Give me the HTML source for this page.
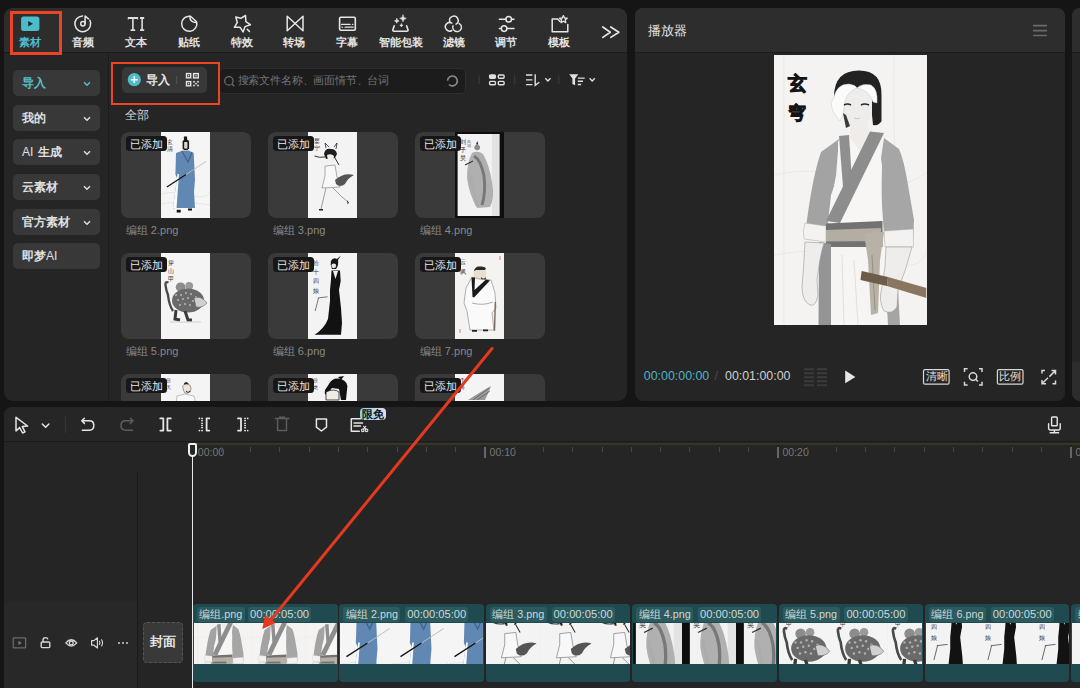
<!DOCTYPE html>
<html><head><meta charset="utf-8">
<style>
*{box-sizing:border-box;margin:0;padding:0}
html,body{width:1080px;height:688px;overflow:hidden;background:#151515;font-family:"Liberation Sans",sans-serif;color:#e6e6e6;position:relative}
.a{position:absolute}
.panel{position:absolute;background:#252525;border-radius:8px;overflow:hidden}
.hdr{position:absolute;left:0;top:0;right:0;height:45px;background:#2d2d2d;border-bottom:1px solid #1b1b1b}
.tl{position:absolute;top:37.2px;width:60px;margin-left:-30px;text-align:center;font-size:10.6px;line-height:11px;font-weight:bold;color:#e4e4e4;white-space:nowrap}
.sbtn{position:absolute;left:13px;width:86.7px;height:26px;background:#383838;border-radius:5px;font-size:12px;font-weight:bold;color:#e0e0e0;line-height:26px;padding-left:9px;white-space:nowrap}
.sbtn svg{position:absolute;left:70px;top:11px}
.card{position:absolute;width:130px;height:86px;background:#3a3a3a;border-radius:8px;overflow:hidden}
.card .img{position:absolute;left:40px;top:0;width:49px;height:86px;background:#f3f2f0;overflow:hidden}
.badge{position:absolute;left:5px;top:4.3px;height:14.7px;padding:0 4px 0 4px;background:#171717;border-radius:3.5px;font-size:10.6px;line-height:16px;color:#e8e8e8;white-space:nowrap}
.lbl{position:absolute;font-size:11px;color:#888;line-height:12px;white-space:nowrap}
.redbox{position:absolute;border:3px solid #ee4426}
.clip{position:absolute;top:604px;width:144.5px;height:78px;background:#1e4a50;border-radius:4px;overflow:hidden}
.clip .th{position:absolute;left:0.7px;right:0.7px;top:19px;height:41px;background:#f2f1ef;overflow:hidden}
.clip .cb{position:absolute;top:2.5px;height:15px;background:#2b5a5f;border-radius:3px;font-size:11.2px;line-height:15px;color:#cbd9d9;padding:0 2px;white-space:nowrap}
.tick{position:absolute;top:447px;width:1px;height:5px;background:#474747}
.mtick{position:absolute;top:446.7px;width:2px;height:11.2px;background:#666}
.rt{position:absolute;top:447px;font-size:10.5px;line-height:11px;color:#777}
</style></head><body>
<svg width="0" height="0" style="position:absolute">
<defs>
<!-- player image 152.5x270 -->
<symbol id="s0" viewBox="0 0 152.5 270">
  <rect width="152.5" height="270" fill="#f4f3f1"/>
  <g fill="none" stroke="#e6e4e0" stroke-width="0.7"><path d="M0 120 Q40 110 80 125 T152 118 M10 0 V270 M0 200 Q50 190 100 205 T152 195 M120 0 Q118 80 125 160"/></g>
  <!-- text 玄穹 -->
  <text x="23" y="34.5" font-size="19" text-anchor="middle" fill="#141414" font-family="Liberation Serif,serif" font-weight="bold" stroke="#141414" stroke-width="0.9">玄</text>
  <text x="22.5" y="64" font-size="18" text-anchor="middle" fill="#141414" font-family="Liberation Serif,serif" font-weight="bold" stroke="#141414" stroke-width="0.9">穹</text>
  <!-- back hair -->
  <path d="M60 42 Q60 15.5 85 15.5 Q108 15.5 107.5 40 L107.5 66 Q105 71 99 70 L96 40 L70 40 Z" fill="#222"/>
  <!-- face -->
  <path d="M68 40 Q70 33 83 33 Q97 33 98 42 L98 58 Q95 70 83 73 Q72 70 69 58 Z" fill="#efedeb"/>
  <!-- white forelocks -->
  <path d="M60 42 Q63 29 75 29 Q82 30 83 33 Q74 36 71 46 L69 60 L66 66 Q58 58 57 48 Z" fill="#fbfbfa" stroke="#c8c8c8" stroke-width="0.5"/>
  <path d="M83 33 Q88 28 97 30 Q104 34 103 48 L99 47 Q96 36 83 33 Z" fill="#fbfbfa" stroke="#c8c8c8" stroke-width="0.5"/>
  <path d="M69 58 L72 73 L76 71 L72 60 Z" fill="#3a3a3a"/>
  <path d="M70 50 Q73.5 48 77 50 M87 50 Q90.5 48 95 50" stroke="#2a2a2a" stroke-width="1.6" fill="none"/>
  <path d="M80 63 Q83 64.5 86 63" stroke="#b9a9a0" stroke-width="0.6" fill="none"/>
  <!-- neck -->
  <path d="M76 68 L76 84 L88 98 L95 84 L94 68 Z" fill="#efecea"/>
  <!-- sleeves -->
  <path d="M65 84 L47 97 Q39 120 33 165 L31 180 L53 184 L56 154 L62 120 Z" fill="#a3a3a3"/>
  <path d="M110 83 L125 94 Q130 105 134 130 L140 165 L139 188 L110 180 L108 150 L106 110 Z" fill="#a6a6a6"/>
  <!-- cuffs -->
  <path d="M31 168 L52 171 L52 187 L30 184 Q28 176 31 168 Z" fill="#f3f2f0" stroke="#a8a8a8" stroke-width="0.5"/>
  <path d="M110 176 L139.4 174 L139.4 192 L111 192 Z" fill="#f3f2f0" stroke="#a8a8a8" stroke-width="0.5"/>
  <!-- white robe body -->
  <path d="M64 86 L76 82 L88 100 L103 78 L108 110 L107 168 L54 168 L57 140 L64 120 Z" fill="#f7f6f4"/>
  <!-- collar band left -->
  <path d="M65 81 L75 80 L78 126 L69 132 Z" fill="#8f8f8f"/>
  <!-- diagonal sash -->
  <path d="M96 76.5 L110 78 L66 168 L52 166 Z" fill="#8d8d8d"/>
  <!-- belt -->
  <path d="M52 168.6 L108.5 166 L108.5 193 L52 193 Z" fill="#727272"/>
  <path d="M52 175 L107 173 L107 186 L52 186.5 Z" fill="#b3ada3"/>
  <!-- lower robe -->
  <path d="M46 192 L124 192 L127 270 L44 270 Z" fill="#f6f5f3"/>
  <path d="M45 187 L57 189 L57 270 L44.5 270 Z" fill="#949494"/>
  <path d="M68 200 L70 270 M80 205 L84 270 M112 240 L116 270" stroke="#d6d6d6" stroke-width="0.7"/>
  <path d="M112 235 L124 233 L126 270 L114 270 Z" fill="#a5a5a5"/>
  <!-- knot tie -->
  <path d="M90 178 L110 177 L106 205 L104 258 L97 260 L94 205 Z" fill="#b8b1a5"/>
  <path d="M98 200 L101 255" stroke="#8d877d" stroke-width="0.8"/>
  <!-- arms -->
  <path d="M31 187 L50 188 Q46 200 43 225 L44 240 Q42 252 36 250 Q28 246 28 232 Q30 210 31 187 Z" fill="#eeedeb" stroke="#9a9a9a" stroke-width="0.6"/>
  <path d="M112 192 L138 192 Q132 215 124 235 L123 252 Q118 260 110 256 Q104 246 108 232 Q112 212 112 192 Z" fill="#eeedeb" stroke="#9a9a9a" stroke-width="0.6"/>
  <!-- sword -->
  <path d="M114 222 L152.5 233 L152.5 243 L113 231 Z" fill="#8a7560"/>
  <path d="M87.6 216 L114 222 L113 231 L86.5 225 Z" fill="#6e5c4a"/>
</symbol>

<!-- thumbnails 49x86 -->
<symbol id="s1" viewBox="0 0 49 86">
  <rect width="49" height="86" fill="#f5f5f5"/>
  <path d="M0 62 Q15 58 30 63 T49 60 M0 72 Q20 68 49 73" stroke="#e6e6e6" stroke-width="1" fill="none"/>
  <text x="5.5" y="12" font-size="5.5" fill="#333">玄</text><text x="5.5" y="19" font-size="5.5" fill="#333">清</text>
  <path d="M22.9 4.6 h3.2 v3.4 h-3.2z" fill="#1a1a1a"/>
  <path d="M21.6 9.5 Q22 7.6 24.8 7.6 Q27.8 7.6 28.1 9.5 L28.1 16.3 L26.5 18 L23 18 L21.6 16.3 Z" fill="#1c1c1c"/>
  <path d="M23.2 10 h3.2 v6.5 h-3.2z" fill="#e6d8c8"/>
  <path d="M15 21 L22 18.5 L27.5 18.5 L32.7 21 L34 47.7 L33 60 L34 76 L12 76.5 L16 46 L14.4 42.5 Z" fill="#6188b3"/>
  <path d="M21 19 L27 30 L31 20" stroke="#40648c" stroke-width="1.2" fill="none"/>
  <path d="M12 76.5 L16.5 42 L18 42 L15.5 76.5 Z" fill="#fafafa"/>
  <path d="M14 76 L34 76 L33 79 L13 79 Z" fill="#f8f8f8"/>
  <path d="M15.7 77.8 h4 v2.6 h-4z M27 76.5 h4 v2 h-4z" fill="#111"/>
  <path d="M5.9 54.9 L25 42.6" stroke="#111" stroke-width="1.2"/>
  <path d="M25 42.6 L45.1 29.4" stroke="#bcbcbc" stroke-width="0.9"/>
</symbol>
<symbol id="s2" viewBox="0 0 49 86">
  <rect width="49" height="86" fill="#f3f3f3"/>
  <text x="5.5" y="11" font-size="5.5" fill="#333">婴</text><text x="5.5" y="17.5" font-size="5.5" fill="#333">宁</text>
  <path d="M16 22 Q17 16 23 17 Q28 17 29 22 L27 26 L18 27 Z" fill="#1e1e1e"/>
  <path d="M18 16 L17 11 L21 15 M26 15 L29 11 L28 17" stroke="#222" stroke-width="0.8" fill="none"/>
  <path d="M19 23 Q23 21 26 24 L25 29 L20 29 Z" fill="#f5f0ea"/>
  <path d="M6.5 24 Q11 26 17 25 M27 26 L31 33" stroke="#333" stroke-width="1" fill="none"/>
  <path d="M17 34 L27 33 L29 45 L32 55 L14 56 L17 44 Z" fill="#f8f8f8" stroke="#777" stroke-width="0.6"/>
  <path d="M27 48 Q36 40 46 43 Q40 46 37 52 Q32 56 28 52 Z" fill="#555"/>
  <path d="M18 56 L13 77 M25 56 L34 65 L40 70" stroke="#777" stroke-width="0.7" fill="none"/>
  <path d="M11 77 h4 v1.5 h-4z M39 68 l2 3 -1.5 1 z" fill="#222"/>
</symbol>
<symbol id="s3" viewBox="0 0 49 86">
  <rect width="49" height="86" fill="#0e0e0e"/>
  <rect x="2.6" y="2" width="41.8" height="82" fill="#f2f2f2"/>
  <rect x="37" y="2" width="7.4" height="82" fill="#e3e3e3"/>
  <text x="5.3" y="12" font-size="6" fill="#222">刘</text><text x="5.3" y="20" font-size="6" fill="#222">子</text><text x="5.3" y="28" font-size="6" fill="#222">昊</text>
  <text x="12" y="10.5" font-size="3.5" fill="#777">风</text><text x="12" y="14.5" font-size="3.5" fill="#777">城</text>
  <circle cx="22.2" cy="15.5" r="2.8" fill="#8a8a8a"/>
  <path d="M21 12.5 l1.2 -3.5 1.2 3.5z" fill="#222"/>
  <path d="M17 21 Q23 18 28 22 Q34 32 37 50 Q40 66 35 75 L22 76 Q14 62 12 46 Q12 30 17 21 Z" fill="#a8a8a8" opacity="0.9"/>
  <path d="M19 24 Q26 28 29 44 Q31 60 27 73" stroke="#4a4a4a" stroke-width="3" fill="none" opacity="0.55"/>
  <path d="M14 40 Q18 55 22 74" stroke="#aaa" stroke-width="3" fill="none" opacity="0.6"/>
  <path d="M10 33 L18 29" stroke="#333" stroke-width="1.2"/>
</symbol>
<symbol id="s4" viewBox="0 0 49 86">
  <rect width="49" height="86" fill="#f4f4f4"/>
  <text x="6.5" y="11.5" font-size="5.5" fill="#333">穿</text><text x="6.5" y="19.5" font-size="5.5" fill="#333">山</text><text x="6.5" y="27.5" font-size="5.5" fill="#333">甲</text>
  <circle cx="19.6" cy="34.2" r="4.8" fill="#8c8c8c"/>
  <circle cx="28.2" cy="32.8" r="3.9" fill="#9a9a9a"/>
  <path d="M7.5 29.5 Q4 28 4.5 32 Q5 37 7 42 Q8 52 12 58" stroke="#4a4a4a" stroke-width="2.4" fill="none"/>
  <ellipse cx="27" cy="47.5" rx="16" ry="12" fill="#6a6a6a"/>
  <g fill="#b0b0b0"><circle cx="20" cy="42" r="1.1"/><circle cx="25" cy="40" r="1.1"/><circle cx="30" cy="41" r="1.1"/><circle cx="35" cy="44" r="1.1"/><circle cx="17" cy="47" r="1.1"/><circle cx="22" cy="46" r="1.1"/><circle cx="27" cy="45" r="1.1"/><circle cx="32" cy="48" r="1.1"/><circle cx="19" cy="52" r="1.1"/><circle cx="24" cy="51" r="1.1"/><circle cx="29" cy="52" r="1.1"/><circle cx="15" cy="42" r="1.1"/></g>
  <path d="M33 45 Q40 42 46 50 Q42 55 35 54 Z" fill="#d0d0d0" stroke="#555" stroke-width="0.5"/>
  <path d="M15 57 L14 66 L19 67 M24 58 L27 67 L31 67" stroke="#3a3a3a" stroke-width="3" fill="none"/>
  <path d="M9 69 H40" stroke="#c8c8c8" stroke-width="0.8"/>
</symbol>
<symbol id="s5" viewBox="0 0 49 86">
  <rect width="49" height="86" fill="#f3f3f3"/>
  <text x="5" y="11.5" font-size="5.5" fill="#333">拾</text><text x="5" y="20.5" font-size="5.5" fill="#333">十</text><text x="5" y="29.5" font-size="5.5" fill="#333">四</text><text x="5" y="39.5" font-size="5.5" fill="#333">娘</text>
  <path d="M22.9 8 Q25 4 29 6 L33 2.5 L30 7 Q31 12 28 16 L24 16 Q22 12 22.9 8 Z" fill="#161616"/>
  <circle cx="25.8" cy="12.8" r="2.4" fill="#e8e6e4"/>
  <path d="M23.5 17.6 L32 17.6 L32.7 28 L31 37 L33 55 L34 70 L33 81.7 L6.5 81.7 Q16 76 20 66 L22 48 L22 37 L22.9 28 Z" fill="#121212"/>
  <path d="M25 18 L27.5 26 L30 18 Z" fill="#eeeeee"/>
  <path d="M9.8 45 L19.6 43.8 M10.5 45 L7.2 58" stroke="#555" stroke-width="0.8"/>
</symbol>
<symbol id="s6" viewBox="0 0 49 86">
  <rect width="49" height="86" fill="#f4f3f1"/>
  <text x="4.5" y="11" font-size="6" fill="#333">云</text><text x="4.5" y="20.5" font-size="6" fill="#333">飒</text>
  <path d="M44 3 h2 v4 h-2z M4 76 h2 v4 h-2z" fill="#e4b8b0"/>
  <path d="M18.5 20 Q18.3 13.7 25 13.7 Q31.4 13.7 31.4 20 L31 25 Q28 28 25 28 Q20 28 19 25 Z" fill="#eadfcf"/>
  <path d="M19 18 Q20 13 25 13.5 Q29 13 31 15 L30 17 L21 17 Z" fill="#2a2a2a"/>
  <path d="M26 24 Q28.5 27.5 31 24 L30.5 27 Q28.5 29 26.5 27 Z" fill="#1a1a1a"/>
  <path d="M17 24 L24 26 L36 27 L40 40 L41 55 L37 60 L39 77 L15 77 L12 58 L9 50 L11 35 Z" fill="#fafafa" stroke="#666" stroke-width="0.5"/>
  <path d="M16.5 24.5 L20 24.5 L19.5 37 L31 26.5 L35 27.5 L19 44.5 L17.5 44 Z" fill="#1a1a1a"/>
  <path d="M17 50 Q28 53 38 49" stroke="#777" stroke-width="0.6" fill="none"/>
  <path d="M40.3 49 L39.5 77.8" stroke="#7a6a5a" stroke-width="1.4"/>
  <path d="M17 77 h5 v1.8 h-5z M28 76.5 h5 v1.8 h-5z" fill="#222"/>
</symbol>
<symbol id="s7" viewBox="0 0 49 86">
  <rect width="49" height="86" fill="#f4f4f4"/>
  <text x="4.5" y="8" font-size="5" fill="#333">云</text><text x="4.5" y="15" font-size="5" fill="#333">天</text>
  <path d="M23 9.5 Q25 6.5 27.5 9.5 L27.5 12 L23 12 Z" fill="#222"/>
  <path d="M21.7 12 Q22 10 26 10 Q30 10.5 30 14 L29.5 17.7 Q27 20 24 19 Q22 17 21.7 12 Z" fill="#ece4da" stroke="#444" stroke-width="0.5"/>
  <path d="M25 17 Q27 20 29 17" stroke="#333" stroke-width="1" fill="none"/>
  <path d="M16 22 L24 20 L33 22 L38 40 L14 40 Z" fill="#f8f8f8" stroke="#888" stroke-width="0.5"/>
</symbol>
<symbol id="s8" viewBox="0 0 49 86">
  <rect width="49" height="86" fill="#f3f3f3"/>
  <text x="4.5" y="8" font-size="5" fill="#333">云</text><text x="4.5" y="15" font-size="5" fill="#333">龙</text>
  <path d="M21 10 Q24 4 30 4.5 Q38 5 39.4 12 L38 26 L33 26 L31 15 L24 14 L19 20 Q16 22 17 16 Z" fill="#121212"/>
  <path d="M18 18 Q26 14 31 18 L31 26 L18 26 Z" fill="#f0ebe4" stroke="#222" stroke-width="0.8"/>
  <path d="M30 3 L36 2 L33 6 Z" fill="#111"/>
</symbol>
<symbol id="s9" viewBox="0 0 49 86">
  <rect width="49" height="86" fill="#f4f4f4"/>
  <text x="4.5" y="8" font-size="5" fill="#333">千</text><text x="4.5" y="15" font-size="5" fill="#333">奇</text>
  <path d="M13 26 Q22 20 36 12 Q33 20 30 26 Z" fill="#9a9a9a"/>
  <path d="M18 26 L34 14 M22 26 L35 17" stroke="#555" stroke-width="0.7"/>
</symbol>
</defs>
</svg>
<!-- ============ Panel 1: media ============ -->
<div class="panel" style="left:4px;top:8px;width:623px;height:392.5px;border-radius:9px"><div class="hdr"></div>
<div class="a" style="left:104px;top:45px;width:1px;height:360px;background:#1c1c1c"></div></div>

<!-- tab icons -->
<svg class="a" style="left:0;top:0" width="640" height="53" viewBox="0 0 640 53" fill="none" stroke="#e6e6e6" stroke-width="1.5" stroke-linecap="round" stroke-linejoin="round">
  <!-- 素材 -->
  <rect x="21.1" y="16.5" width="18.3" height="14.6" rx="2.5" fill="#4cbccb" stroke="none"/>
  <path d="M28.2 21 L28.2 26.6 L33 23.8 Z" fill="#1f2a2c" stroke="none"/>
  <!-- 音频 -->
  <path d="M89.84 20.21 A7.9 7.9 0 1 1 82.52 15.9"/>
  <circle cx="82.9" cy="23.7" r="2.2"/>
  <path d="M85.1 23.4 V16 L88.5 18.8"/>
  <!-- 文本 TI -->
  <path d="M127.8 17.1 H138.1 V20 L137.1 19.1 H128.8 L127.8 20 Z M132.1 19 H133.7 V29.3 H132.1 Z M130.6 29.2 H135.2 V31 H130.6 Z M140 17.1 H144.2 V19 H140 Z M141.3 19 H142.9 V29.2 H141.3 Z M140 29.2 H144.2 V31 H140 Z" fill="#dedede" stroke="none"/>
  <!-- 贴纸 -->
  <path d="M190.5 16.25 A7.6 7.6 0 1 0 196.6 21.7 L190.5 16.25"/>
  <path d="M189.9 16.4 Q189.9 22.6 196.4 22.5"/>
  <!-- 特效 star -->
  <path d="M235.76 17.06 L240.81 18.28 L245.52 15.49 L245.87 21.59 L250.4 24.73 L245 26.65 L243.08 31.88 L240.11 27.35 L234.36 27.35 L237.32 22.46 Z"/>
  <path d="M247.2 29.2 L249.4 31.4"/>
  <!-- 转场 -->
  <path d="M287.2 16.3 L303 30.8 L303 16.3 L287.2 30.8 Z"/>
  <!-- 字幕 -->
  <rect x="339.6" y="17.2" width="15.7" height="13" rx="1.2" stroke-width="1.6"/>
  <path d="M341.6 24.4 L350 24.4 M352.4 24.4 L352.8 24.4 M342 27.2 L342.4 27.2 M345.1 27.2 L353.1 27.2" stroke-width="1.3"/>
  <!-- 智能包装 -->
  <path d="M394.2 25.8 L392.9 29.8 Q392.6 31.2 394 31.2 L406.9 31.2 Q408.3 31.2 408 29.8 L406.6 25.8" stroke-width="1.6"/>
  <path d="M403 15 Q403.3 18.2 406.3 18.45 Q403.3 18.7 403 21.9 Q402.7 18.7 399.7 18.45 Q402.7 18.2 403 15 Z" fill="#e6e6e6" stroke-width="0.6"/>
  <path d="M396.8 18.6 Q397 20.7 399.1 20.9 Q397 21.1 396.8 23.2 Q396.6 21.1 394.5 20.9 Q396.6 20.7 396.8 18.6 Z" fill="#e6e6e6" stroke-width="0.6"/>
  <path d="M401.4 23.8 Q401.6 25.2 403 25.4 Q401.6 25.6 401.4 27 Q401.2 25.6 399.8 25.4 Q401.2 25.2 401.4 23.8 Z" fill="#e6e6e6" stroke-width="0.5"/>
  <!-- 滤镜 -->
  <path d="M449.75 21.51 A4.3 4.3 0 1 1 456.05 24.12"/>
  <path d="M451.85 23.08 A4.3 4.3 0 1 0 451.85 30.52"/>
  <path d="M453.06 25.83 A4.3 4.3 0 1 0 459.25 23.58"/>
  <!-- 调节 -->
  <path d="M499.4 19.3 L505.8 19.3 M511.6 19.3 L514 19.3 M499.4 28.6 L501.2 28.6 M507 28.6 L514 28.6"/>
  <circle cx="508.7" cy="19.3" r="2.8"/>
  <circle cx="504.1" cy="28.6" r="2.8"/>
  <!-- 模板 -->
  <path d="M560 21.4 L557.8 19 L552.2 19 L552.2 31.8 L567.8 31.8 L567.8 24.6"/>
  <path d="M563.4 15.6 L564.5 18 L567.2 18.2 L565.2 20 L565.8 22.6 L563.4 21.3 L561 22.6 L561.6 20 L559.6 18.2 L562.3 18 Z" stroke-width="1.3"/>
  <!-- >> -->
  <path d="M602.8 27 L610.3 32.2 L602.8 37.4 M610.8 27 L618.8 32.2 L610.8 37.4" stroke-width="1.7"/>
</svg>
<div class="tl" style="left:30.3px;color:#4fbccb">素材</div>
<div class="tl" style="left:83.4px">音频</div>
<div class="tl" style="left:136.2px">文本</div>
<div class="tl" style="left:188.9px">贴纸</div>
<div class="tl" style="left:241.8px">特效</div>
<div class="tl" style="left:294.4px">转场</div>
<div class="tl" style="left:347.4px">字幕</div>
<div class="tl" style="left:401px">智能包装</div>
<div class="tl" style="left:453.5px">滤镜</div>
<div class="tl" style="left:506.4px">调节</div>
<div class="tl" style="left:559.3px">模板</div>

<!-- sidebar -->
<div class="sbtn" style="top:70.2px;color:#55bfce">导入<svg width="8" height="6" viewBox="0 0 8 6"><path d="M1 1.3 L4 4.3 L7 1.3" stroke="#55bfce" stroke-width="1.5" fill="none"/></svg></div>
<div class="sbtn" style="top:104.8px">我的<svg width="8" height="6" viewBox="0 0 8 6"><path d="M1 1.3 L4 4.3 L7 1.3" stroke="#ddd" stroke-width="1.5" fill="none"/></svg></div>
<div class="sbtn" style="top:139.3px"><span style="font-weight:normal">AI</span><span style="margin-left:4.5px">生成</span><svg width="8" height="6" viewBox="0 0 8 6"><path d="M1 1.3 L4 4.3 L7 1.3" stroke="#ddd" stroke-width="1.5" fill="none"/></svg></div>
<div class="sbtn" style="top:173.9px">云素材<svg width="8" height="6" viewBox="0 0 8 6"><path d="M1 1.3 L4 4.3 L7 1.3" stroke="#ddd" stroke-width="1.5" fill="none"/></svg></div>
<div class="sbtn" style="top:208.6px">官方素材<svg width="8" height="6" viewBox="0 0 8 6"><path d="M1 1.3 L4 4.3 L7 1.3" stroke="#ddd" stroke-width="1.5" fill="none"/></svg></div>
<div class="sbtn" style="top:243px">即梦<span style="font-weight:normal">AI</span></div>

<!-- import button -->
<div class="a" style="left:121.5px;top:67px;width:85.5px;height:26px;background:#383838;border-radius:5px"></div>
<svg class="a" style="left:120px;top:66px" width="90" height="28" viewBox="120 66 90 28">
  <circle cx="134.3" cy="79.7" r="6.6" fill="#4fbccb"/>
  <path d="M134.3 76.3 V83.1 M130.9 79.7 H137.7" stroke="#fff" stroke-width="1.5"/>
  <path d="M176.7 76 V84" stroke="#555" stroke-width="1"/>
  <g fill="none" stroke="#e6e6e6" stroke-width="1.4">
    <rect x="186.5" y="73.6" width="4.2" height="4.2"/><rect x="193.6" y="73.6" width="4.7" height="4.3"/><rect x="186.5" y="81.6" width="4.2" height="4.2"/>
  </g>
  <g fill="#e6e6e6"><rect x="188" y="75.1" width="1.2" height="1.2"/><rect x="195.3" y="75.1" width="1.3" height="1.3"/><rect x="188" y="83.1" width="1.2" height="1.2"/>
  <rect x="193.2" y="81" width="1.6" height="1.6"/><rect x="197.2" y="81" width="1.6" height="1.6"/><rect x="195.2" y="82.8" width="1.6" height="1.6"/><rect x="193.2" y="84.7" width="1.6" height="1.6"/><rect x="197.2" y="84.7" width="1.6" height="1.6"/></g>
</svg>
<div class="a" style="left:145.5px;top:72.5px;font-size:12px;line-height:14px;font-weight:bold;color:#e6e6e6">导入</div>

<!-- search -->
<div class="a" style="left:219px;top:67.5px;width:246.5px;height:26.5px;background:#1c1c1c;border:1px solid #2e2e2e;border-radius:5px"></div>
<svg class="a" style="left:218px;top:66px" width="250" height="30" viewBox="218 66 250 30" fill="none" stroke="#707070" stroke-width="1.2">
  <circle cx="228.9" cy="80.9" r="4.2"/><path d="M232 84 L234.3 86.2"/>
  <path d="M447.52 80.57 A4.9 4.9 0 1 1 448.94 84.46" stroke="#8c8c8c" stroke-width="1.6"/>
</svg>
<div class="a" style="left:237.6px;top:74.2px;letter-spacing:-0.18px;font-size:11px;line-height:13px;color:#747474;white-space:nowrap">搜索文件名称、画面情节、台词</div>

<!-- view tools -->
<svg class="a" style="left:470px;top:66px" width="140" height="28" viewBox="470 66 140 28">
  <path d="M479.2 75.6 V84.2 M514.7 75.6 V84.2 M558.8 75.6 V84.2" stroke="#3a3a3a" stroke-width="1.2"/>
  <g fill="none" stroke="#e0e0e0" stroke-width="1.4">
    <rect x="489.6" y="75" width="5.8" height="3.3" rx="1" fill="#e0e0e0"/><rect x="498.3" y="75" width="5.8" height="3.3" rx="1"/>
    <rect x="489.6" y="81.4" width="5.8" height="3.3" rx="1"/><rect x="498.3" y="81.4" width="5.8" height="3.3" rx="1"/>
    <path d="M526 75 H532.4 M526 79.9 H532.4 M526 84.6 H532.4 M535.2 74.3 V85.4 L539.3 82.2"/>
    <path d="M545.3 78.3 L547.9 80.9 L550.5 78.3 M589.6 78.3 L592.2 80.9 L594.8 78.3"/>
  </g>
  <path d="M569.2 74.3 H578.3 L575.1 78.6 V85.3 L572.4 84.1 V78.6 Z" fill="#e0e0e0"/>
  <path d="M577.8 78.1 H584.7 M577.8 81.3 H583 M577.8 84.5 H581.2" stroke="#e0e0e0" stroke-width="1.4"/>
</svg>

<div class="a" style="left:125px;top:108px;font-size:12px;line-height:14px;color:#dcdcdc">全部</div>

<!-- cards -->
<div class="card" style="left:121.1px;top:132px"><div class="img"><svg width="49" height="86" viewBox="0 0 49 86"><use href="#s1"/></svg></div><div class="badge">已添加</div></div>
<div class="card" style="left:268.1px;top:132px"><div class="img"><svg width="49" height="86" viewBox="0 0 49 86"><use href="#s2"/></svg></div><div class="badge">已添加</div></div>
<div class="card" style="left:415.1px;top:132px"><div class="img"><svg width="49" height="86" viewBox="0 0 49 86"><use href="#s3"/></svg></div><div class="badge">已添加</div></div>
<div class="lbl" style="left:125.8px;top:224px">编组 2.png</div>
<div class="lbl" style="left:272.8px;top:224px">编组 3.png</div>
<div class="lbl" style="left:419.8px;top:224px">编组 4.png</div>
<div class="card" style="left:121.1px;top:253px"><div class="img"><svg width="49" height="86" viewBox="0 0 49 86"><use href="#s4"/></svg></div><div class="badge">已添加</div></div>
<div class="card" style="left:268.1px;top:253px"><div class="img"><svg width="49" height="86" viewBox="0 0 49 86"><use href="#s5"/></svg></div><div class="badge">已添加</div></div>
<div class="card" style="left:415.1px;top:253px"><div class="img"><svg width="49" height="86" viewBox="0 0 49 86"><use href="#s6"/></svg></div><div class="badge">已添加</div></div>
<div class="lbl" style="left:125.8px;top:345px">编组 5.png</div>
<div class="lbl" style="left:272.8px;top:345px">编组 6.png</div>
<div class="lbl" style="left:419.8px;top:345px">编组 7.png</div>
<div class="a" style="left:108px;top:374px;width:519px;height:26.5px;overflow:hidden">
<div class="card" style="left:13.1px;top:0"><div class="img"><svg width="49" height="86" viewBox="0 0 49 86"><use href="#s7"/></svg></div><div class="badge">已添加</div></div>
<div class="card" style="left:160.1px;top:0"><div class="img"><svg width="49" height="86" viewBox="0 0 49 86"><use href="#s8"/></svg></div><div class="badge">已添加</div></div>
<div class="card" style="left:307.1px;top:0"><div class="img"><svg width="49" height="86" viewBox="0 0 49 86"><use href="#s9"/></svg></div><div class="badge">已添加</div></div>
</div>

<div class="redbox" style="left:9.9px;top:10.8px;width:52.2px;height:44px;border-width:3.1px"></div>
<div class="redbox" style="left:111px;top:61.5px;width:109px;height:43.8px;border-width:2.9px"></div>
<!-- ============ Panel 2: player ============ -->
<div class="panel" style="left:635px;top:8px;width:430px;height:392.5px"><div class="hdr"></div></div>
<div class="a" style="left:648.3px;top:23.5px;font-size:13px;line-height:14px;color:#e6e6e6;font-weight:500">播放器</div>
<svg class="a" style="left:1030px;top:22px" width="20" height="16" viewBox="1030 22 20 16"><path d="M1033 25.6 H1047 M1033 30.6 H1047 M1033 35.5 H1047" stroke="#6a6a6a" stroke-width="1.6"/></svg>
<!-- player image -->
<div class="a" id="pimg" style="left:774.2px;top:55px;width:152.5px;height:270px;background:#f4f3f1;overflow:hidden"><svg width="152.5" height="270" viewBox="0 0 152.5 270"><use href="#s0"/></svg></div>
<div class="a" style="left:643.8px;top:369px;font-size:12.4px;line-height:14px;color:#4fb3c6;white-space:nowrap">00:00:00:00</div>
<div class="a" style="left:714.5px;top:369px;font-size:12.4px;line-height:14px;color:#4a4a4a">/</div>
<div class="a" style="left:725px;top:369px;font-size:12.4px;line-height:14px;color:#d0d0d0;white-space:nowrap">00:01:00:00</div>
<svg class="a" style="left:800px;top:365px" width="260" height="24" viewBox="800 365 260 24">
  <g stroke="#3b3b3b" stroke-width="2"><path d="M804 369.2 H814 M804 373.2 H814 M804 377.2 H814 M804 381.2 H814 M804 385.2 H814 M817 369.2 H827 M817 373.2 H827 M817 377.2 H827 M817 381.2 H827 M817 385.2 H827"/></g>
  <path d="M845.2 370.5 L845.2 383.2 L855.4 376.9 Z" fill="#e6e6e6"/>
  <g fill="none" stroke="#d8d8d8" stroke-width="1.2">
    <rect x="923.5" y="369.6" width="25.6" height="14.6" rx="1.5"/>
    <rect x="997.4" y="369.6" width="25.6" height="14.6" rx="1.5"/>
    <path d="M964.5 372 V368.8 H967.6 M979 368.8 H982 V372 M982 381.7 V385 H979 M967.6 385 H964.5 V381.7" stroke-width="1.5"/>
    <circle cx="973" cy="376.6" r="3.8" stroke-width="1.5"/><path d="M975.8 379.4 L977.9 381.5" stroke-width="1.5"/>
    <path d="M1042 373.6 V370.5 H1045 M1051.5 370.5 H1055.5 V374.5 M1055.5 370.5 L1049.4 376.6 M1042 380 V383.7 H1046 M1042 383.7 L1048 377.7 M1055.5 380.5 V383.7 H1052.5" stroke-width="1.5"/>
  </g>
</svg>
<div class="a" style="left:924.5px;top:370.3px;width:24px;text-align:center;font-size:11px;line-height:13px;color:#e0e0e0">清晰</div>
<div class="a" style="left:998.4px;top:370.3px;width:24px;text-align:center;font-size:11px;line-height:13px;color:#e0e0e0">比例</div>

<!-- ============ Panel 3 ============ -->
<div class="panel" style="left:1072px;top:8px;width:40px;height:392.5px"><div class="hdr"></div>
<div class="a" style="left:0;top:354px;width:40px;height:40px;background:#2d2d2d"></div></div>
<!-- ============ Timeline ============ -->
<div class="panel" style="left:4px;top:407px;width:1100px;height:300px;border-radius:8px 0 0 0">
  <div class="a" style="left:0;top:0;right:0;height:34.5px;background:#262626;border-bottom:1.5px solid #1b1b1b"></div>
</div>
<div class="a" style="left:192px;top:443px;width:900px;height:1.5px;background:#3b3421"></div>
<div class="a" style="left:4px;top:601.8px;width:133px;height:90px;background:#282828"></div>
<div class="a" style="left:137px;top:472px;width:1px;height:220px;background:#1a1a1a"></div>

<svg class="a" style="left:0;top:405px" width="1080" height="40" viewBox="0 405 1080 40" fill="none" stroke="#e6e6e6" stroke-width="1.5" stroke-linecap="round" stroke-linejoin="round">
  <!-- select cursor -->
  <path d="M16 417.3 L16 431 L19.6 427.6 L22.6 433 L25 431.8 L22.3 426.6 L27.6 426 Z"/>
  <path d="M42.3 424 L45.6 427.2 L48.9 424"/>
  <path d="M65.4 416.5 V432.5" stroke="#3a3a3a" stroke-width="1"/>
  <!-- undo -->
  <path d="M84.4 418.2 L81.8 420.8 L84.4 423.4 M82.2 420.8 H89.3 Q93.8 420.8 93.8 425.5 Q93.8 430.2 89.3 430.2 H82.3"/>
  <!-- redo -->
  <path d="M130.4 418.2 L133 420.8 L130.4 423.4 M132.6 420.8 H125.5 Q121 420.8 121 425.5 Q121 430.2 125.5 430.2 H132.5" stroke="#5c5c5c"/>
  <!-- split -->
  <path d="M160.3 418.4 H163.3 V430.6 H160.3 M170.8 418.4 H167.4 V430.6 H170.8" stroke-width="1.8"/>
  <path d="M209.3 418.4 H206.6 V430.6 H209.3" stroke-width="1.8"/>
  <path d="M238 418.4 H241 V430.6 H238" stroke-width="1.8"/>
  <g fill="#e6e6e6" stroke="none"><rect x="201.2" y="417.7" width="1.7" height="1.4"/><rect x="201.2" y="419.9" width="1.7" height="1.4"/><rect x="201.2" y="422.6" width="1.7" height="1.4"/><rect x="201.2" y="424.8" width="1.7" height="1.4"/><rect x="201.2" y="427.0" width="1.7" height="1.4"/><rect x="201.2" y="429.9" width="1.7" height="1.4"/><rect x="244.2" y="417.7" width="1.7" height="1.4"/><rect x="244.2" y="419.9" width="1.7" height="1.4"/><rect x="244.2" y="422.6" width="1.7" height="1.4"/><rect x="244.2" y="424.8" width="1.7" height="1.4"/><rect x="244.2" y="427.0" width="1.7" height="1.4"/><rect x="244.2" y="429.9" width="1.7" height="1.4"/><circle cx="199.4" cy="418.4" r="0.85"/><circle cx="199.4" cy="430.6" r="0.85"/><circle cx="247.7" cy="418.4" r="0.85"/><circle cx="247.7" cy="430.6" r="0.85"/></g>
  <!-- trash -->
  <path d="M275.3 418.5 H288.8 M277.6 418.5 V430.6 H286.5 V418.5 M279.6 417.2 H284.5" stroke="#5c5c5c"/>
  <!-- marker -->
  <path d="M316.4 419 H326.5 V427.2 L321.4 431 L316.4 427.2 Z"/>
  <!-- caption clip -->
  <path d="M360.5 418.7 H351.3 V431.3 H359.3 M354 422.9 H362.5 M354 426 H360.5"/>
  <circle cx="362.8" cy="430.3" r="1.3" stroke-width="1.1"/><circle cx="366.6" cy="430.3" r="1.3" stroke-width="1.1"/>
  <path d="M363.6 426.4 L366 429.2 M365.8 426.4 L363.4 429.2" stroke-width="1.1"/>
  <!-- mic -->
  <rect x="1051.6" y="417" width="5.6" height="8.8" rx="0.8" stroke-width="1.4"/>
  <path d="M1048.6 423.8 V428.6 Q1048.6 430 1050 430 H1058.8 Q1060.2 430 1060.2 428.6 V423.8 M1054.4 430 V432.6 M1050.2 432.7 H1058.6" stroke-width="1.4"/>
</svg>
<div class="a" style="left:359.8px;top:407.5px;width:26px;height:12.5px;border-radius:4px;background:linear-gradient(90deg,#7dd6e8,#ecd8f0);font-size:10.5px;line-height:12.5px;color:#141414;text-align:center;font-weight:bold">限免</div>

<!-- ruler -->
<div class="mtick" style="left:484.15px"></div>
<div class="mtick" style="left:777.05px"></div>
<div class="mtick" style="left:1069.95px"></div>
<div class="rt" style="left:197.8px">00:00</div>
<div class="rt" style="left:489.6px">00:10</div>
<div class="rt" style="left:782.5px">00:20</div>
<div class="rt" style="left:1075.4px">00:30</div>
<div class="tick" style="left:220.79px"></div>
<div class="tick" style="left:250.08px"></div>
<div class="tick" style="left:279.37px"></div>
<div class="tick" style="left:308.66px"></div>
<div class="tick" style="left:337.95px"></div>
<div class="tick" style="left:367.24px"></div>
<div class="tick" style="left:396.53px"></div>
<div class="tick" style="left:425.82px"></div>
<div class="tick" style="left:455.11px"></div>
<div class="tick" style="left:513.69px"></div>
<div class="tick" style="left:542.98px"></div>
<div class="tick" style="left:572.27px"></div>
<div class="tick" style="left:601.56px"></div>
<div class="tick" style="left:630.85px"></div>
<div class="tick" style="left:660.14px"></div>
<div class="tick" style="left:689.43px"></div>
<div class="tick" style="left:718.72px"></div>
<div class="tick" style="left:748.01px"></div>
<div class="tick" style="left:806.59px"></div>
<div class="tick" style="left:835.88px"></div>
<div class="tick" style="left:865.17px"></div>
<div class="tick" style="left:894.46px"></div>
<div class="tick" style="left:923.75px"></div>
<div class="tick" style="left:953.04px"></div>
<div class="tick" style="left:982.33px"></div>
<div class="tick" style="left:1011.62px"></div>
<div class="tick" style="left:1040.91px"></div>
<!-- track header icons -->
<svg class="a" style="left:8px;top:630px" width="125" height="25" viewBox="8 630 125 25" fill="none" stroke="#d8d8d8" stroke-width="1.2" stroke-linejoin="round">
  <rect x="13.2" y="637.9" width="12.5" height="10" stroke="#7a7a7a" stroke-width="1"/>
  <path d="M18.4 640.8 V645 L21.8 642.9 Z" fill="#7a7a7a" stroke="none"/>
  <rect x="41.2" y="642" width="8.6" height="5.6" rx="1" stroke-width="1.4"/>
  <path d="M43 642 V640.2 Q43 637.6 45.5 637.6 Q47.6 637.6 47.9 639.4" stroke-width="1.4"/>
  <path d="M65.8 642.9 Q71.3 636.6 76.8 642.9 Q71.3 649.2 65.8 642.9 Z" stroke-width="1.3"/>
  <circle cx="71.3" cy="642.9" r="1.9" stroke-width="1.3"/>
  <path d="M91.6 640.6 H94 L97.4 637.8 V648 L94 645.2 H91.6 Z" stroke-width="1.2"/>
  <path d="M99.3 640.8 Q100.6 642.9 99.3 645 M101.4 639.4 Q103.6 642.9 101.4 646.4" stroke-width="1.1"/>
</svg>
<div class="a" style="left:118px;top:641.6px;width:2.2px;height:2.2px;border-radius:1px;background:#d0d0d0;box-shadow:4px 0 0 #d0d0d0,8px 0 0 #d0d0d0"></div>
<div class="a" style="left:143px;top:622px;width:40.3px;height:40.6px;background:#393939;border:1px dashed #555;border-radius:4px;font-size:13px;line-height:38px;text-align:center;color:#e6e6e6;font-weight:bold">封面</div>

<!-- clips -->
<div class="clip" style="left:193.2px"><div class="th"><svg style="position:absolute;left:0.0px;top:0" width="54" height="41" viewBox="0 77 152.5 115.8" preserveAspectRatio="none"><use href="#s0" width="152.5" height="270"/></svg><svg style="position:absolute;left:54.2px;top:0" width="54" height="41" viewBox="0 77 152.5 115.8" preserveAspectRatio="none"><use href="#s0" width="152.5" height="270"/></svg><svg style="position:absolute;left:108.4px;top:0" width="54" height="41" viewBox="0 77 152.5 115.8" preserveAspectRatio="none"><use href="#s0" width="152.5" height="270"/></svg></div><div class="cb" style="left:3.6px;font-size:10.8px;padding:0 2.5px">编组.png</div><div class="cb" style="left:54.8px">00:00:05:00</div></div>
<div class="clip" style="left:339.4px"><div class="th"><svg style="position:absolute;left:0.0px;top:0" width="54" height="41" viewBox="0 24.4 49 37.2" preserveAspectRatio="none"><use href="#s1" width="49" height="86"/></svg><svg style="position:absolute;left:54.2px;top:0" width="54" height="41" viewBox="0 24.4 49 37.2" preserveAspectRatio="none"><use href="#s1" width="49" height="86"/></svg><svg style="position:absolute;left:108.4px;top:0" width="54" height="41" viewBox="0 24.4 49 37.2" preserveAspectRatio="none"><use href="#s1" width="49" height="86"/></svg></div><div class="cb" style="left:4px;font-size:10.8px;padding:0 2.5px">编组 2.png</div><div class="cb" style="left:65.8px">00:00:05:00</div></div>
<div class="clip" style="left:485.8px"><div class="th"><svg style="position:absolute;left:0.0px;top:0" width="54" height="41" viewBox="0 24.4 49 37.2" preserveAspectRatio="none"><use href="#s2" width="49" height="86"/></svg><svg style="position:absolute;left:54.2px;top:0" width="54" height="41" viewBox="0 24.4 49 37.2" preserveAspectRatio="none"><use href="#s2" width="49" height="86"/></svg><svg style="position:absolute;left:108.4px;top:0" width="54" height="41" viewBox="0 24.4 49 37.2" preserveAspectRatio="none"><use href="#s2" width="49" height="86"/></svg></div><div class="cb" style="left:4px;font-size:10.8px;padding:0 2.5px">编组 3.png</div><div class="cb" style="left:65.8px">00:00:05:00</div></div>
<div class="clip" style="left:632.2px"><div class="th"><svg style="position:absolute;left:0.0px;top:0" width="54" height="41" viewBox="0 24.4 49 37.2" preserveAspectRatio="none"><use href="#s3" width="49" height="86"/></svg><svg style="position:absolute;left:54.2px;top:0" width="54" height="41" viewBox="0 24.4 49 37.2" preserveAspectRatio="none"><use href="#s3" width="49" height="86"/></svg><svg style="position:absolute;left:108.4px;top:0" width="54" height="41" viewBox="0 24.4 49 37.2" preserveAspectRatio="none"><use href="#s3" width="49" height="86"/></svg></div><div class="cb" style="left:4px;font-size:10.8px;padding:0 2.5px">编组 4.png</div><div class="cb" style="left:65.8px">00:00:05:00</div></div>
<div class="clip" style="left:778.6px"><div class="th"><svg style="position:absolute;left:0.0px;top:0" width="54" height="41" viewBox="0 24.4 49 37.2" preserveAspectRatio="none"><use href="#s4" width="49" height="86"/></svg><svg style="position:absolute;left:54.2px;top:0" width="54" height="41" viewBox="0 24.4 49 37.2" preserveAspectRatio="none"><use href="#s4" width="49" height="86"/></svg><svg style="position:absolute;left:108.4px;top:0" width="54" height="41" viewBox="0 24.4 49 37.2" preserveAspectRatio="none"><use href="#s4" width="49" height="86"/></svg></div><div class="cb" style="left:4px;font-size:10.8px;padding:0 2.5px">编组 5.png</div><div class="cb" style="left:65.8px">00:00:05:00</div></div>
<div class="clip" style="left:924.9px"><div class="th"><svg style="position:absolute;left:0.0px;top:0" width="54" height="41" viewBox="0 24.4 49 37.2" preserveAspectRatio="none"><use href="#s5" width="49" height="86"/></svg><svg style="position:absolute;left:54.2px;top:0" width="54" height="41" viewBox="0 24.4 49 37.2" preserveAspectRatio="none"><use href="#s5" width="49" height="86"/></svg><svg style="position:absolute;left:108.4px;top:0" width="54" height="41" viewBox="0 24.4 49 37.2" preserveAspectRatio="none"><use href="#s5" width="49" height="86"/></svg></div><div class="cb" style="left:4px;font-size:10.8px;padding:0 2.5px">编组 6.png</div><div class="cb" style="left:65.8px">00:00:05:00</div></div>
<div class="clip" style="left:1071.2px"><div class="th"><svg style="position:absolute;left:0.0px;top:0" width="54" height="41" viewBox="0 24.4 49 37.2" preserveAspectRatio="none"><use href="#s6" width="49" height="86"/></svg><svg style="position:absolute;left:54.2px;top:0" width="54" height="41" viewBox="0 24.4 49 37.2" preserveAspectRatio="none"><use href="#s6" width="49" height="86"/></svg><svg style="position:absolute;left:108.4px;top:0" width="54" height="41" viewBox="0 24.4 49 37.2" preserveAspectRatio="none"><use href="#s6" width="49" height="86"/></svg></div><div class="cb" style="left:4px;font-size:10.8px;padding:0 2.5px">编组 7.png</div></div>

<!-- playhead -->
<div class="a" style="left:191.8px;top:450px;width:1.3px;height:240px;background:#e8e8e8"></div>
<div class="a" style="left:187.6px;top:443px;width:9.6px;height:13.6px;border:2px solid #f0f0f0;border-radius:2px 2px 5px 5px;background:#262626"></div>

<!-- red arrow -->
<svg class="a" style="left:0;top:0" width="1080" height="688" viewBox="0 0 1080 688">
  <path d="M492 348.5 L270 621" stroke="#e5391f" stroke-width="3" stroke-linecap="round"/>
  <path d="M262.3 629 L265.2 614.8 L275.6 623 Z" fill="#e5391f"/>
</svg>
</body></html>
